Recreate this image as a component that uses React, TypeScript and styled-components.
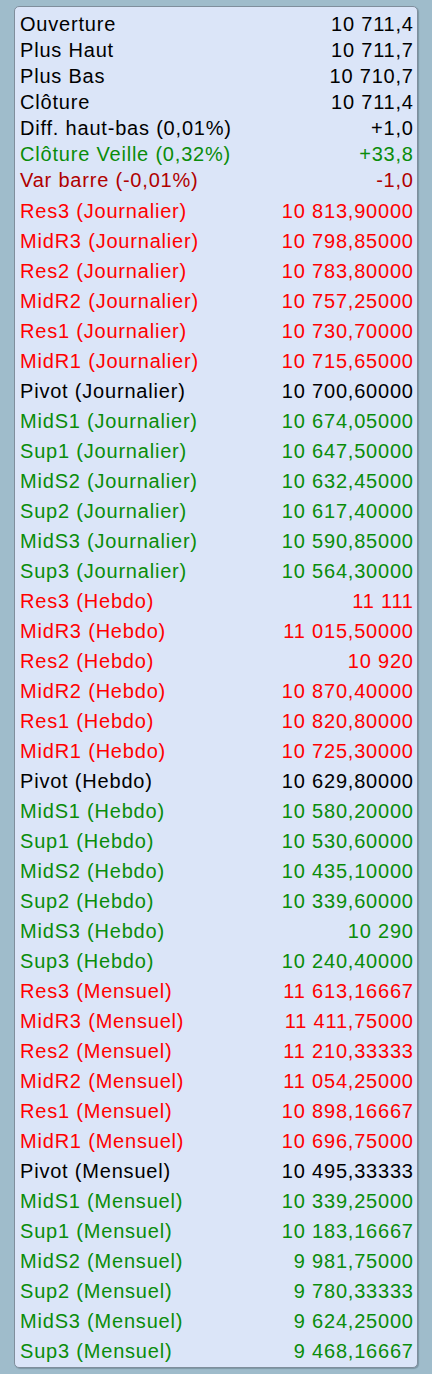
import React from "react";
import styled, { createGlobalStyle } from "styled-components";

const GlobalStyle = createGlobalStyle`
    html, body {
        margin: 0;
        padding: 0;
        background-color: #9fbccb;
    }
`

const Page = styled.div`
    box-sizing: border-box;
    width: 432px;
    height: 1374px;
    padding: 6px 14px 6px 14px;
    background-color: #9fbccb;
`

const Panel = styled.div`
    box-sizing: border-box;
    width: 404px;
    height: 1362px;
    background-color: #dbe5f8;
    border: 1px solid #7f8e9c;
    border-radius: 5px;
    box-shadow: 1px 1px 1px rgba(60, 80, 95, 0.35);
    padding: 4px 4px 0 5px;
    font-family: "Liberation Sans", Arial, sans-serif;
    font-size: 20px;
    letter-spacing: 0.8px;
`

const Section = styled.div<{ $gap?: number }>`
    display: flex;
    flex-direction: column;
    margin-top: ${p => p.$gap ?? 0}px;
`

const Row = styled.div<{ $h: number; $color: string }>`
    display: flex;
    justify-content: space-between;
    align-items: center;
    height: ${p => p.$h}px;
    color: ${p => p.$color};
    white-space: nowrap;
`

const Label = styled.span``

const Value = styled.span`
    text-align: right;
    margin-right: -0.8px;
`

const BLACK = "#000000";
const GREEN = "#0a8c0a";
const RED = "#ff0000";
const DARK_RED = "#b00000";

const summary: [string, string, string][] = [
    ["Ouverture", "10 711,4", BLACK],
    ["Plus Haut", "10 711,7", BLACK],
    ["Plus Bas", "10 710,7", BLACK],
    ["Clôture", "10 711,4", BLACK],
    ["Diff. haut-bas (0,01%)", "+1,0", BLACK],
    ["Clôture Veille (0,32%)", "+33,8", GREEN],
    ["Var barre (-0,01%)", "-1,0", DARK_RED],
];

const names = ["Res3", "MidR3", "Res2", "MidR2", "Res1", "MidR1", "Pivot", "MidS1", "Sup1", "MidS2", "Sup2", "MidS3", "Sup3"];

const periods: [string, string[]][] = [
    ["Journalier", ["10 813,90000", "10 798,85000", "10 783,80000", "10 757,25000", "10 730,70000", "10 715,65000", "10 700,60000", "10 674,05000", "10 647,50000", "10 632,45000", "10 617,40000", "10 590,85000", "10 564,30000"]],
    ["Hebdo", ["11 111", "11 015,50000", "10 920", "10 870,40000", "10 820,80000", "10 725,30000", "10 629,80000", "10 580,20000", "10 530,60000", "10 435,10000", "10 339,60000", "10 290", "10 240,40000"]],
    ["Mensuel", ["11 613,16667", "11 411,75000", "11 210,33333", "11 054,25000", "10 898,16667", "10 696,75000", "10 495,33333", "10 339,25000", "10 183,16667", "9 981,75000", "9 780,33333", "9 624,25000", "9 468,16667"]],
];

const levelColor = (i: number) => (i < 6 ? RED : i === 6 ? BLACK : GREEN);

const App = () => (
    <>
        <GlobalStyle />
        <Page>
            <Panel>
                <Section>
                    {summary.map(([label, value, color]) => (
                        <Row key={label} $h={26} $color={color}>
                            <Label>{label}</Label>
                            <Value>{value}</Value>
                        </Row>
                    ))}
                </Section>
                <Section $gap={3}>
                    {periods.map(([period, values]) =>
                        values.map((value, i) => (
                            <Row key={period + i} $h={30} $color={levelColor(i)}>
                                <Label>{names[i]} ({period})</Label>
                                <Value>{value}</Value>
                            </Row>
                        ))
                    )}
                </Section>
            </Panel>
        </Page>
    </>
);

export default App;
